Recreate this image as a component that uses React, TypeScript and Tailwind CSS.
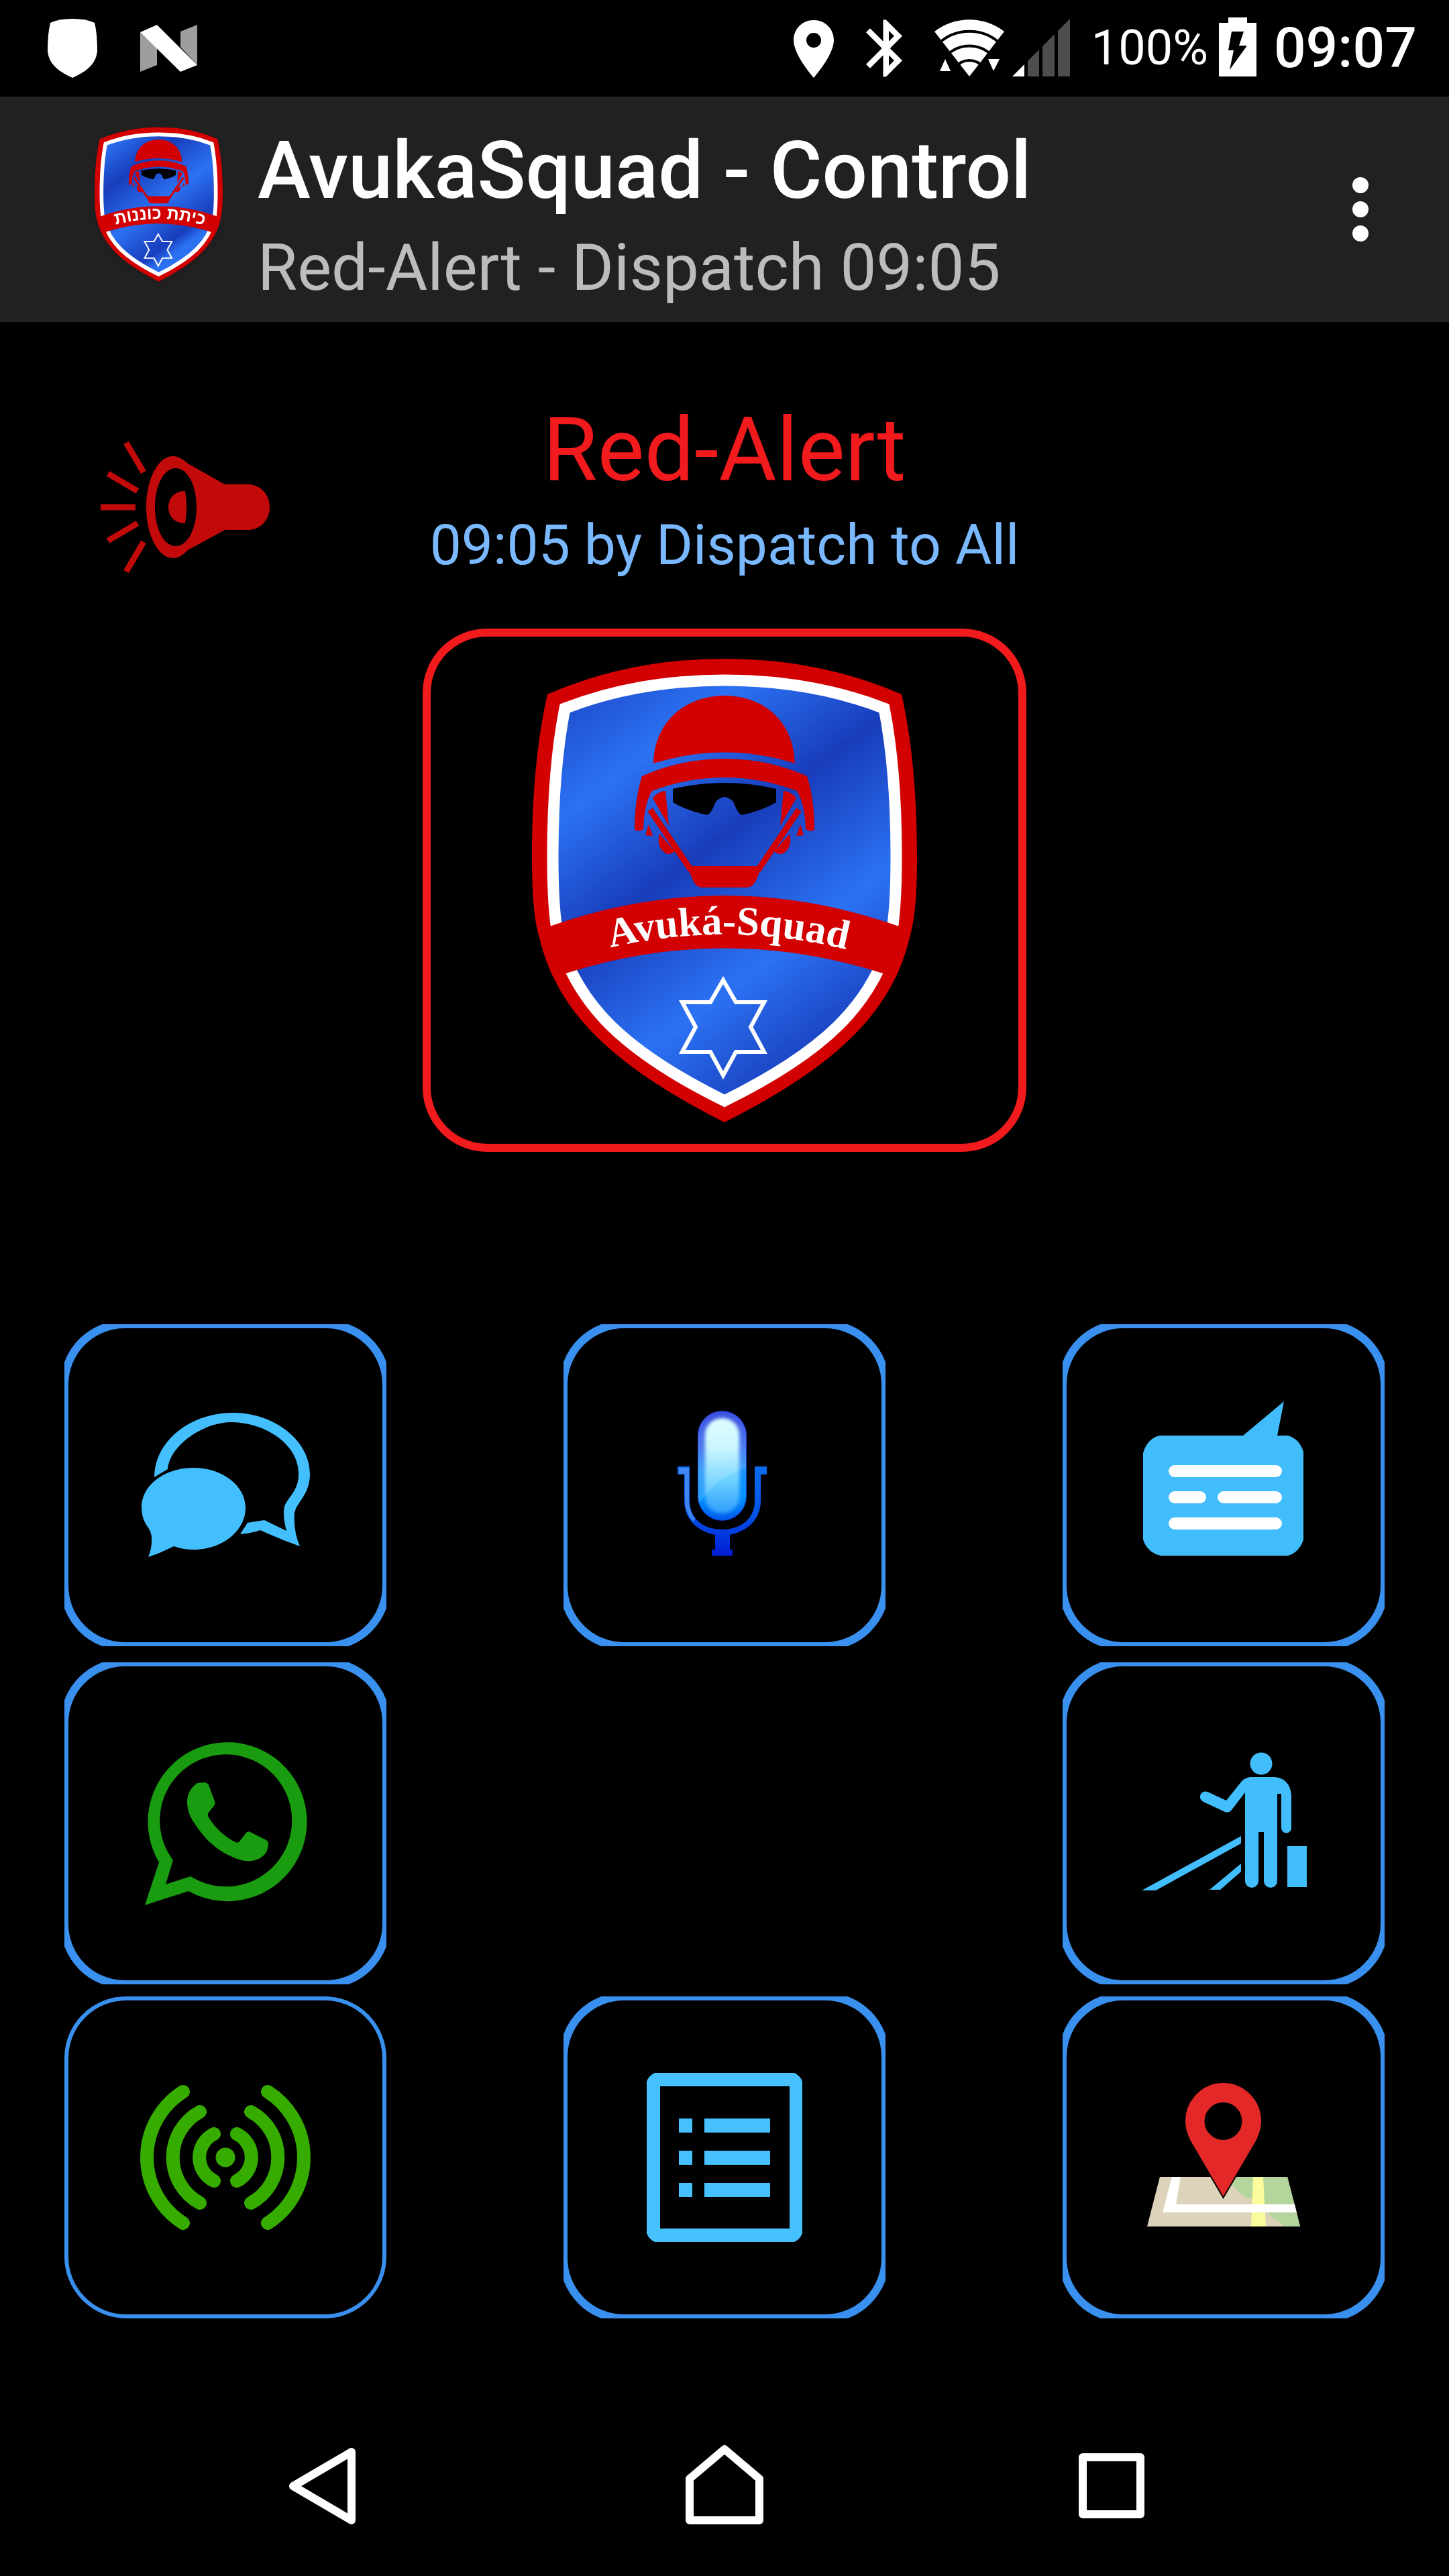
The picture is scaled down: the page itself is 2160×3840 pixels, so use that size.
/**
 * AvukaSquad control screen
 */

import type { ComponentType, ReactNode } from 'react';
import { clsx } from 'clsx';

interface EmblemProps {
  id: string;
  label: string;
  labelClassName: string;
  shine?: string;
  className?: string;
}

function Emblem({ id, label, labelClassName, shine, className }: EmblemProps) {
  return (
    <svg viewBox="0 0 580 700" className={className} aria-hidden="true">
      <defs>
        <linearGradient
          id={`${id}-blue`}
          gradientUnits="userSpaceOnUse"
          x1="0"
          y1="0"
          x2="480"
          y2="640"
          gradientTransform={shine}
        >
          <stop offset="0.03" stopColor="#183dbb" />
          <stop offset="0.278" stopColor="#2b72f3" />
          <stop offset="0.485" stopColor="#183dbb" />
          <stop offset="0.72" stopColor="#2b72f3" />
          <stop offset="0.93" stopColor="#183dbb" />
          <stop offset="1" stopColor="#2b72f3" />
        </linearGradient>
        <clipPath id={`${id}-clip`}>
          <path d="M290 5Q148 5 26 58C10 130 3 210 3 300C3 370 8 400 14 420C40 530 120 610 290 696C460 610 540 530 566 420C572 400 577 370 577 300C577 210 570 130 554 58Q432 5 290 5Z" />
        </clipPath>
        <path id={`${id}-baseline`} d="M0 473Q290 359 580 473" />
      </defs>

      {/* Shield */}
      <path
        d="M290 5Q148 5 26 58C10 130 3 210 3 300C3 370 8 400 14 420C40 530 120 610 290 696C460 610 540 530 566 420C572 400 577 370 577 300C577 210 570 130 554 58Q432 5 290 5Z"
        fill="#d20000"
      />
      <path
        d="M290 37Q160 37 52 79C40 140 34 220 34 300C34 370 38 400 42 420C70 520 140 590 290 664C440 590 510 520 538 420C542 400 546 370 546 300C546 220 540 140 528 79Q420 37 290 37Z"
        fill={`url(#${id}-blue)`}
        stroke="#fff"
        strokeWidth="17"
      />

      {/* Soldier */}
      <g fill="#d20000">
        <path d="M184 161C186 95 235 60 290 60S393 95 395 161Q290 128 184 161Z" />
        <path d="M156 260Q156 215 167 180Q225 154 290 154T413 180Q424 215 424 260Q418 264 411 259Q410 222 398 202Q345 182 290 182T182 202Q170 222 169 259Q162 264 156 260Z" />
        <path d="M183 213Q190 203 202 202L207 254Z" />
        <path d="M397 213Q390 203 378 202L373 254Z" />
        <path d="M177 252L183 269L172 268Z" />
        <path d="M403 252L397 269L408 268Z" />
        <path d="M193 266Q188 285 202 295Q210 298 216 292Z" />
        <path d="M387 266Q392 285 378 295Q370 298 364 292Z" />
        <path d="M234 314H346L338 333Q333 346 322 346H258Q247 346 242 333Z" />
      </g>
      <path d="M179 230L240 320M401 230L340 320" stroke="#d20000" strokeWidth="9" />
      <path d="M213 199Q250 190 290 190T367 199V219Q345 232 315 238Q309 234 303 218Q296 211 290 211T277 218Q271 234 265 238Q235 232 213 219Z" />

      {/* Banner */}
      <path
        d="M0 415Q290 301 580 415V493Q290 380 0 493Z"
        fill="#d20000"
        clipPath={`url(#${id}-clip)`}
      />
      <text className={labelClassName} fill="#fff" textAnchor="middle">
        <textPath href={`#${id}-baseline`} startOffset="51%">
          {label}
        </textPath>
      </text>

      {/* Star */}
      <path
        d="M288 484L307 517H349L329 554L349 591H307L288 626L269 591H227L247 554L227 517H269Z"
        fill="none"
        stroke="#fff"
        strokeWidth="6"
      />
    </svg>
  );
}

/* Status bar glyphs, all drawn on the 144px bar height */

function ShieldGlyph() {
  return (
    <svg viewBox="0 0 74 144" className="h-36 w-[74px]" fill="#fff">
      <path d="M37 28Q16 28 4 34Q0 50 0 76C2 98 20 108 37 116C54 108 72 98 74 76Q74 50 70 34Q58 28 37 28Z" />
    </svg>
  );
}

function NougatGlyph() {
  return (
    <svg viewBox="0 0 85 144" className="h-36 w-[85px]">
      <path d="M0 48L25 72V97L0 107ZM60 47L85 37V97L60 70Z" fill="#9e9e9e" />
      <path d="M0 48L25 37L85 97L60 107Z" fill="#fff" />
    </svg>
  );
}

function LocationGlyph() {
  return (
    <svg viewBox="0 0 60 144" className="h-36 w-[60px]" fill="#fff">
      <path
        fillRule="evenodd"
        d="M30 30C13 30 0 43 0 60C0 82 30 116 30 116S60 82 60 60C60 43 47 30 30 30ZM30 49A11 11 0 1 1 30 71A11 11 0 1 1 30 49Z"
      />
    </svg>
  );
}

function BluetoothGlyph() {
  return (
    <svg viewBox="5 2 12.71 20" className="h-[86px] w-[54px]" fill="#fff">
      <path d="M17.71 7.71L12 2h-1v7.59L6.41 5 5 6.41 10.59 12 5 17.59 6.41 19 11 14.41V22h1l5.71-5.71-4.3-4.29 4.3-4.29zM13 5.83l1.88 1.88L13 9.59V5.83zm1.88 10.46L13 18.17v-3.76l1.88 1.88z" />
    </svg>
  );
}

function WifiGlyph() {
  return (
    <svg viewBox="0 0 104 144" className="h-36 w-[104px]">
      <path
        d="M52 114L0 47A85 85 0 0 1 104 47ZM8 106L16 88L24 106ZM80 88H97L88 106Z"
        fill="#fff"
      />
      <path
        d="M4 67A67 67 0 0 1 100 67M18 83A47 47 0 0 1 86 83M32 100A25 25 0 0 1 72 100"
        fill="none"
        stroke="#000"
        strokeWidth="4"
      />
    </svg>
  );
}

function SignalGlyph() {
  return (
    <svg viewBox="0 0 86 144" className="h-36 w-[86px]">
      <path d="M0 114L18 96V114Z" fill="#fff" />
      <path d="M23 91L40 74V114H23ZM45 69L63 51V114H45ZM68 46L86 28V114H68Z" fill="#4d4d4d" />
    </svg>
  );
}

function BatteryGlyph() {
  return (
    <svg viewBox="0 0 56 144" className="h-36 w-[56px]">
      <path d="M14 26H42V34H56V114H0V34H14Z" fill="#fff" />
      <path d="M19 47H37L30 68H42L16 104L22 75H14Z" fill="#000" />
    </svg>
  );
}

function MegaphoneIcon() {
  return (
    <svg viewBox="150 651 252 210" className="h-[210px] w-[252px]" aria-hidden="true">
      <path
        fillRule="evenodd"
        fill="#c20a0a"
        d="M258 680C267 680 274 686 280 691L335 722H372C391 724 402 739 402 756S391 788 372 790H335L280 820C274 826 267 832 258 832C236 832 218 798 218 756S236 680 258 680ZM262 698C244 698 231 724 231 756S244 814 262 814S293 788 293 756S280 698 262 698Z"
      />
      <path d="M276 732Q280 756 276 780C261 780 251 770 251 756S261 732 276 732Z" fill="#c20a0a" />
      <path
        d="M188 660L214 704M161 706L205 732M150 756H202M161 806L205 780M188 852L214 808"
        stroke="#c20a0a"
        strokeWidth="9"
      />
    </svg>
  );
}

/* Tile icons share the 480px tile space, cropped to the middle */

function TileSvg({ children }: { children: ReactNode }) {
  return (
    <svg viewBox="96 96 288 288" className="size-72" aria-hidden="true">
      {children}
    </svg>
  );
}

function ChatIcon() {
  return (
    <TileSvg>
      <g fill="#43bffe">
        <path d="M115 273C115 240 149 214 192 214S270 240 270 274S235 336 193 336C182 336 172 334 163 331Q144 341 125 347Q131 333 130 317Q129 308 122 299Q115 288 115 273Z" />
        <path d="M134 228C134 175 187 132 251 132S366 175 366 223C366 255 345 266 343 282Q341 308 351 331Q320 320 292 307Q277 312 262 313L273 296L298 292L331 308Q325 285 328 272C331 260 350 248 349 223C350 183 305 147 249 146C205 146 156 183 154 216Z" />
      </g>
    </TileSvg>
  );
}

function MicIcon() {
  return (
    <TileSvg>
      <defs>
        <linearGradient id="mic-body" x1="0" y1="0" x2="0" y2="1">
          <stop offset="0" stopColor="#1a2fd8" />
          <stop offset="0.3" stopColor="#2f62ec" />
          <stop offset="0.55" stopColor="#1f94fc" />
          <stop offset="0.8" stopColor="#0090ff" />
          <stop offset="1" stopColor="#0057ea" />
        </linearGradient>
        <linearGradient id="mic-glow" x1="0" y1="0" x2="0" y2="1">
          <stop offset="0" stopColor="#d8fdff" />
          <stop offset="0.3" stopColor="#c4f5ff" />
          <stop offset="0.65" stopColor="#6cd2ff" />
          <stop offset="1" stopColor="#2f9cfc" />
        </linearGradient>
        <linearGradient id="mic-stand" x1="0" y1="0" x2="0" y2="1">
          <stop offset="0" stopColor="#0b6cf2" />
          <stop offset="0.55" stopColor="#0452e6" />
          <stop offset="1" stopColor="#021cd6" />
        </linearGradient>
        <clipPath id="mic-clip">
          <rect x="200" y="129" width="73" height="164" rx="36.5" />
        </clipPath>
        <filter id="mic-soft" x="-20%" y="-20%" width="140%" height="140%">
          <feGaussianBlur stdDeviation="2.5" />
        </filter>
      </defs>
      <path
        d="M170 212H188V263C188 290 209 306 236.500 306S285 290 285 263V212H303V224H294V263C294 291 274 309 248 314V336H252V345H221V336H226V314C200 309 180 291 180 263V224H170Z"
        fill="url(#mic-stand)"
      />
      <path d="M172 214H187V263Q188 280 196 290L193 294Q181 280 181 263V223H172Z" fill="#4f90f5" opacity="0.8" />
      <g clipPath="url(#mic-clip)">
        <rect x="200" y="129" width="73" height="164" rx="36.5" fill="url(#mic-body)" />
        <rect x="211" y="140" width="51" height="142" rx="25" fill="url(#mic-glow)" filter="url(#mic-soft)" />
        <path d="M200 128H274V214Q232 224 202 267H200Z" fill="#fff" opacity="0.15" />
      </g>
      <rect x="200.500" y="129.500" width="72" height="163" rx="36" fill="none" stroke="#0a25d0" strokeOpacity="0.7" />
    </TileSvg>
  );
}

function MessageIcon() {
  return (
    <TileSvg>
      <path
        d="M144 166H269L330 115L320 166H336Q353 171 359 190V321Q353 340 336 345H146Q126 340 120 321V192Q126 171 144 166Z"
        fill="#41bdfb"
      />
      <path
        d="M167 219H318M167 258H205M240 258H318M167 297H318"
        stroke="#fff"
        strokeWidth="18"
        strokeLinecap="round"
      />
    </TileSvg>
  );
}

function WhatsAppIcon() {
  return (
    <TileSvg>
      <g fill="#199c0f">
        <path
          fillRule="evenodd"
          d="M120 362L141 298A118.500 118.500 0 1 1 185 341ZM151 331L188 319A98.500 98.500 0 1 0 162 295Z"
        />
        <path d="M198 180L209 179Q214 180 215 183L224 207Q226 211 222 215L214 225Q213 228 215 231C226 249 241 261 255 268Q258 270 261 267L271 254Q274 251 277 253L301 265Q304 267 304 271Q303 282 298 287C288 296 277 298 264 295C238 287 216 273 196 243C187 231 183 220 183 208C183 196 189 186 198 180Z" />
      </g>
    </TileSvg>
  );
}

function HitchhikeIcon() {
  return (
    <TileSvg>
      <g fill="#42befc">
        <circle cx="296" cy="151" r="16.500" />
        <path d="M279 171H317Q339 174 341 198V247A7.500 7.500 0 0 1 326 247V196H320V326A10 10 0 0 1 300 326V253H292V326A10 10 0 0 1 272 326V194L252 220Q248 225 242 223L210 208A7.800 7.800 0 0 1 216 193L244 206L264 181Q269 173 279 171Z" />
        <path d="M335 274H364V335H335Z" />
        <path d="M118 340L266 259V270L139 340ZM219 339L266 300V312L235 339Z" />
      </g>
    </TileSvg>
  );
}

function BroadcastIcon() {
  return (
    <TileSvg>
      <circle cx="240" cy="240" r="14.500" fill="#37ac00" />
      <path
        d="M177 142A116 116 0 0 0 177 338M303 142A116 116 0 0 1 303 338M202 172A77.500 77.500 0 0 0 202 308M278 172A77.500 77.500 0 0 1 278 308M223 205A39 39 0 0 0 223 275M257 205A39 39 0 0 1 257 275"
        fill="none"
        stroke="#37ac00"
        strokeWidth="20"
        strokeLinecap="round"
      />
    </TileSvg>
  );
}

function ListIcon() {
  return (
    <TileSvg>
      <path
        fillRule="evenodd"
        fill="#47c1fe"
        d="M136 114H344Q353 118 356 127V353Q353 362 344 366H136Q127 362 124 353V127Q127 118 136 114ZM144 134V346H337V134Z"
      />
      <path
        d="M172 182H192V203H172ZM210 182H308V203H210ZM172 230H192V251H172ZM210 230H308V251H210ZM172 278H192V299H172ZM210 278H308V299H210Z"
        fill="#47c1fe"
      />
    </TileSvg>
  );
}

function MapIcon() {
  return (
    <TileSvg>
      <path d="M145 269H335L354 343H126Z" fill="#ddd3bb" />
      <path
        d="M258 269H335L346 311H300V301H282Q272 302 270 296Q262 294 260 288Q252 284 254 277ZM306 322H349L354 343H329Q325 335 317 332Q308 328 306 322Z"
        fill="#b4d59b"
      />
      <path d="M284 269H299L303 343H281Z" fill="#fafb9a" />
      <path d="M163 269H176L169 310H346L349 322H149Z" fill="#fff" />
      <path
        fillRule="evenodd"
        d="M239.500 128C271 128 297 154 297 186C297 196 294 205 290 214L239.500 300L189 214C185 205 182 196 182 186C182 154 208 128 239.500 128ZM239.500 159A27 27 0 1 0 239.500 213A27 27 0 1 0 239.500 159Z"
        fill="#e42828"
        stroke="#000"
        strokeWidth="2"
      />
    </TileSvg>
  );
}

interface Tile {
  name: string;
  icon: ComponentType;
  thin?: boolean;
}

const tileRows: (Tile | null)[][] = [
  [
    { name: 'Chat', icon: ChatIcon },
    { name: 'Voice', icon: MicIcon },
    { name: 'Messages', icon: MessageIcon },
  ],
  [
    { name: 'WhatsApp', icon: WhatsAppIcon },
    null,
    { name: 'Hitchhike', icon: HitchhikeIcon },
  ],
  [
    { name: 'Broadcast', icon: BroadcastIcon, thin: true },
    { name: 'List', icon: ListIcon },
    { name: 'Map', icon: MapIcon },
  ],
];

function TileButton({ name, icon: Icon, thin }: Tile) {
  return (
    <button
      type="button"
      aria-label={name}
      className="flex size-[480px] items-center justify-center overflow-hidden"
    >
      {/* The thick frame is larger than the button, so its straight sides are cut in half */}
      <span
        className={clsx(
          'flex shrink-0 items-center justify-center border-[#3990ee]',
          thin ? 'size-[480px] rounded-[92px] border-[6px]' : 'size-[492px] rounded-[96px] border-[12px]'
        )}
      >
        <Icon />
      </span>
    </button>
  );
}

function StatusBar() {
  return (
    <div className="flex h-36 items-center justify-between pr-12 pl-[71px] text-white">
      <div className="flex items-center gap-16">
        <ShieldGlyph />
        <NougatGlyph />
      </div>
      <div className="flex items-center gap-[26px]">
        <div className="flex items-center gap-12 pr-1.5">
          <LocationGlyph />
          <BluetoothGlyph />
          <div className="flex items-center gap-3">
            <WifiGlyph />
            <SignalGlyph />
          </div>
        </div>
        <div className="flex items-center gap-4">
          <span className="text-[72px] leading-[84px]">100%</span>
          <BatteryGlyph />
        </div>
        <span className="text-[84px] leading-[96px] font-medium">09:07</span>
      </div>
    </div>
  );
}

function AppBar() {
  return (
    <header className="flex h-[336px] items-center bg-[#212121] pr-[108px] pl-[140px]">
      <Emblem
        id="logo"
        label="כיתת כוננות"
        labelClassName="font-['Liberation_Sans'] text-[76px] font-bold"
        shine="translate(-90 -90)"
        className="mb-4 h-[233px] w-[193px] drop-shadow-md"
      />
      <div className="ml-[51px] flex-1">
        <h1 className="text-[119px] leading-[156px] font-medium text-white">AvukaSquad - Control</h1>
        <p className="mt-[18px] text-[96px] leading-[96px] text-[#bcbcbc]">Red-Alert - Dispatch 09:05</p>
      </div>
      <button type="button" aria-label="More options" className="px-3">
        <svg viewBox="0 0 24 96" className="h-24 w-6" fill="#fff">
          <circle cx="12" cy="12" r="12" />
          <circle cx="12" cy="48" r="12" />
          <circle cx="12" cy="84" r="12" />
        </svg>
      </button>
    </header>
  );
}

function NavBar() {
  return (
    <nav className="grid h-72 grid-cols-3 items-center justify-items-center px-[198px]">
      <button type="button" aria-label="Back">
        <svg viewBox="0 0 168 168" className="size-[168px]">
          <path
            d="M116 43V145L29 94Z"
            fill="none"
            stroke="#fff"
            strokeWidth="12"
            strokeLinejoin="round"
          />
        </svg>
      </button>
      <button type="button" aria-label="Home">
        <svg viewBox="0 0 168 168" className="size-[168px]">
          <path
            d="M84 39L136 83V145H32V83Z"
            fill="none"
            stroke="#fff"
            strokeWidth="12"
            strokeLinejoin="round"
          />
        </svg>
      </button>
      <button type="button" aria-label="Recent apps">
        <svg viewBox="0 0 168 168" className="size-[168px]">
          <path
            d="M30 51H116V136H30Z"
            fill="none"
            stroke="#fff"
            strokeWidth="12"
            strokeLinejoin="round"
          />
        </svg>
      </button>
    </nav>
  );
}

export default function App() {
  return (
    <div className="flex min-h-screen flex-col bg-black font-[Roboto,sans-serif]">
      <StatusBar />
      <AppBar />

      <main className="flex flex-1 flex-col">
        {/* Current alert */}
        <section className="flex flex-col items-center pt-[113px]">
          <div className="grid w-full grid-cols-[1fr_auto_1fr] items-end px-[150px]">
            <MegaphoneIcon />
            <div className="text-center">
              <h2 className="text-[132px] leading-[156px] text-[#f11a1c]">Red-Alert</h2>
              <p className="mt-4 text-[84px] leading-[96px] text-[#7ab8ff]">09:05 by Dispatch to All</p>
            </div>
          </div>
          <button
            type="button"
            aria-label="Alert squad"
            className="mt-[76px] flex h-[780px] w-[900px] items-center justify-center rounded-[96px] border-[12px] border-[#f11a1c]"
          >
            <Emblem
              id="squad"
              label="Avuká-Squad"
              labelClassName="font-['Liberation_Serif'] text-[61px] font-bold"
              className="h-[700px] w-[580px]"
            />
          </button>
        </section>

        {/* Action tiles */}
        <section className="mt-auto px-24 pt-24 pb-24">
          {tileRows.map((row, i) => (
            <div key={i} className={clsx('flex justify-between', i === 1 && 'pt-6 pb-[18px]')}>
              {row.map((tile, j) =>
                tile ? <TileButton key={tile.name} {...tile} /> : <div key={j} className="w-[480px]" />
              )}
            </div>
          ))}
        </section>
      </main>

      <NavBar />
    </div>
  );
}
